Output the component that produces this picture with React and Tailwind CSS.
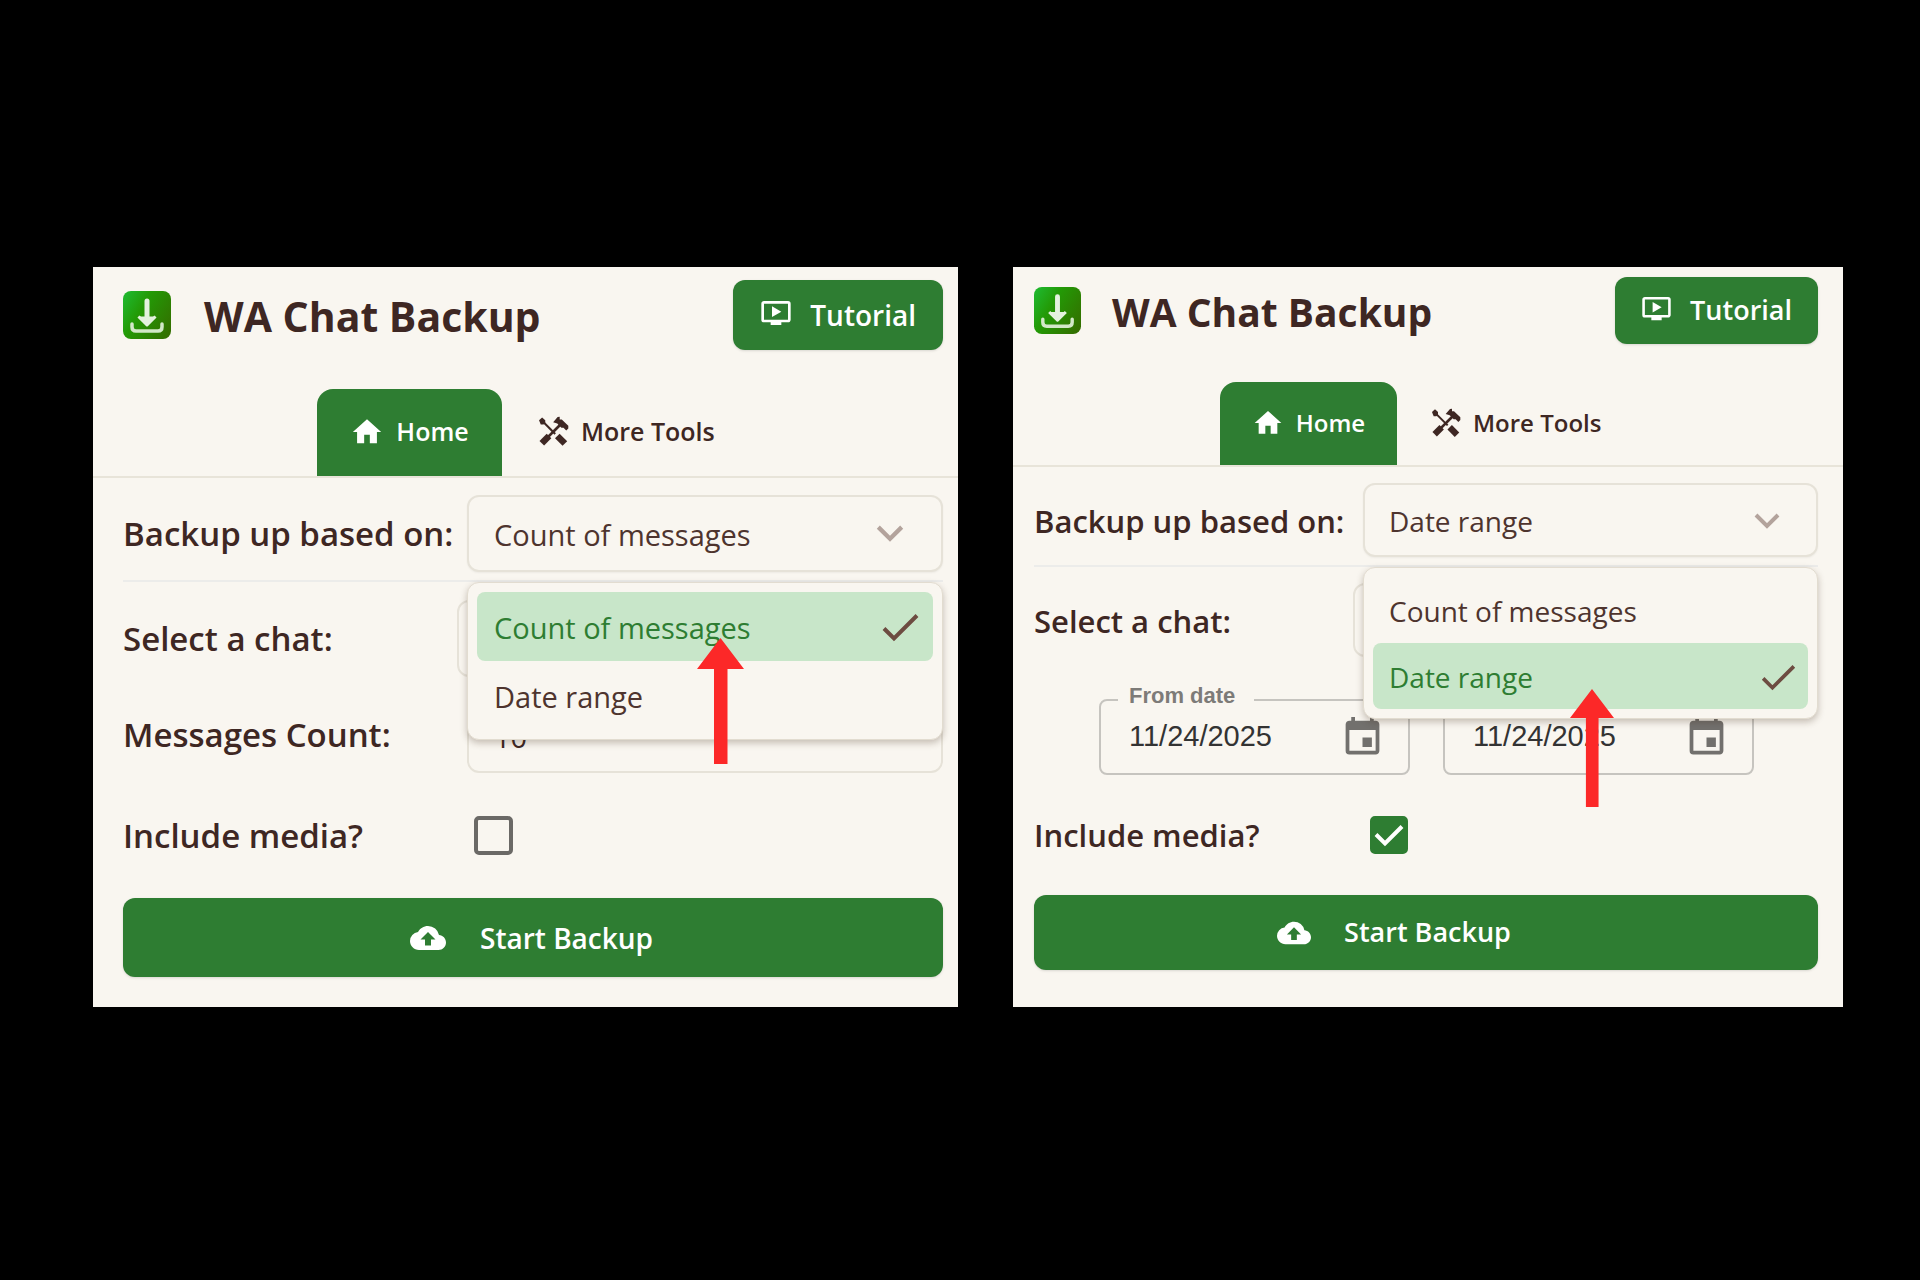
import React from 'react';
import { MdBackup, MdEvent, MdHome, MdOndemandVideo } from 'react-icons/md';

// The popup is drawn twice, once a little smaller than the other
const sizes = {
  large: {
    header: 'h-[122px] pl-[30px] pr-[15px] pt-[13px]',
    brand: 'gap-[33px] h-[69px]',
    logo: 'size-12',
    title: 'text-[41px]',
    tutorial: 'h-[70px] px-[27px] gap-[18px] text-[28px]',
    tutorialIcon: 'size-8 mb-1',
    tabs: 'h-[89px] pl-[224px] gap-[36px] text-[25px]',
    homeTab: 'w-[185px] gap-3',
    toolsTab: 'gap-3',
    tabIcon: 'size-[34px]',
    toolsIcon: 'size-[31px]',
    body: 'pl-[30px] pr-[15px] pb-[30px]',
    label: 'text-[33px] w-[344px]',
    row: 'h-[104px] pt-[17px]',
    chatRow: 'h-[114px] pt-[18px]',
    countRow: 'h-[77px]',
    mediaRow: 'h-[125px]',
    field: 'h-[77px] px-[25px] text-[29px]',
    chevron: 'right-[39px] h-[17px] w-7',
    menu: 'top-[87px] p-[9px]',
    option: 'h-[69px] pt-[2px] pl-[17px] pr-[14px] text-[29px]',
    optionIcon: 'h-[29px] w-[37px]',
    checkbox: 'size-[39px]',
    start: 'h-[79px] text-[28px] gap-[34px] pr-[3px]',
    startIcon: 'size-9',
  },
  small: {
    header: 'h-[115px] pl-[21px] pr-[25px] pt-[10px]',
    brand: 'gap-[31px] h-[67px]',
    logo: 'size-[47px]',
    title: 'text-[39px]',
    tutorial: 'h-[67px] px-[26px] gap-[18px] text-[27px]',
    tutorialIcon: 'size-[31px] mb-1',
    tabs: 'h-[85px] pl-[207px] gap-[34px] text-[24px]',
    homeTab: 'w-[177px] gap-3',
    toolsTab: 'gap-3',
    tabIcon: 'size-8',
    toolsIcon: 'size-[30px]',
    body: 'pl-[21px] pr-[25px] pb-[37px]',
    label: 'text-[31px] w-[329px]',
    row: 'h-[100px] pt-4',
    chatRow: 'h-[124px] pt-4',
    mediaRow: 'h-[120px]',
    field: 'h-[74px] px-6 text-[28px]',
    chevron: 'right-[38px] h-4 w-[26px]',
    menu: 'top-[84px] p-[9px]',
    option: 'h-[66px] pt-[2px] pl-4 pr-3 text-[28px]',
    optionIcon: 'h-[27px] w-[35px]',
    checkbox: 'size-[38px]',
    start: 'h-[75px] text-[27px] gap-[33px] pr-[64px]',
    startIcon: 'size-[34px]',
  },
};

const basis = ['Count of messages', 'Date range'];

function Logo({ className, id }) {
  return (
    <svg viewBox="0 0 48 48" className={className} aria-hidden="true">
      <defs>
        <linearGradient id={id} x1="0" y1="0.2" x2="1" y2="0.8">
          <stop offset="0" stopColor="#1fb52a" />
          <stop offset="0.35" stopColor="#239a06" />
          <stop offset="1" stopColor="#337000" />
        </linearGradient>
      </defs>
      <rect width="48" height="48" rx="8" fill={`url(#${id})`} />
      <path d="M24 10v18" stroke="#e4f2df" strokeWidth="5" strokeLinecap="round" />
      <path d="M15.5 25.5L24 34L32.5 25.5" fill="#e4f2df" stroke="#e4f2df" strokeWidth="3" strokeLinejoin="round" />
      <path d="M9 33v3q0 4 4 4h22q4 0 4-4v-3" fill="none" stroke="#d2e8c8" strokeWidth="3.5" strokeLinecap="round" />
    </svg>
  );
}

function ToolsIcon({ className }) {
  return (
    <svg viewBox="0 0 90 90" className={className} fill="none" stroke="currentColor" aria-hidden="true">
      <path d="M14 16L50 52" strokeWidth="6" />
      <path d="M3 12L12 4L21 12V20L16 25H8z" fill="currentColor" stroke="none" />
      <path d="M56 58L78 80" strokeWidth="19" />
      <path d="M28 62L66 24" strokeWidth="8" />
      <path d="M11 79L32 58" strokeWidth="19" />
      <path d="M44 18L57 3L63 2V10H69L88 28V36L82 42L74 34H68L62 28L56 22z" fill="currentColor" stroke="none" />
    </svg>
  );
}

function Arrow({ className }) {
  return (
    <svg viewBox="0 0 47 126" className={className} aria-hidden="true">
      <path d="M23.5 0L47 31H30.5V126H17V31H0z" fill="#fc2828" />
    </svg>
  );
}

function BasisSelect({ s, id, selected }) {
  return (
    <div className="relative flex-1">
      <select
        id={id}
        defaultValue={selected}
        className={`block w-full appearance-none rounded-[12px] border-2 border-[#e6e2d8] bg-[#f9f6f0] pt-[2px] text-[#4e342e] shadow-xs outline-none ${s.field}`}
      >
        {basis.map((name) => (
          <option key={name}>{name}</option>
        ))}
      </select>
      <svg viewBox="0 0 26 16" className={`pointer-events-none absolute top-[30px] ${s.chevron}`} aria-hidden="true">
        <path d="M2 2L13 13L24 2" fill="none" stroke="#b3a39c" strokeWidth="4" />
      </svg>
      <ul
        role="listbox"
        className={`absolute inset-x-0 z-10 rounded-[12px] border border-[#e2dcd0] bg-[#f9f6f0] shadow-[0_3px_7px_rgba(60,40,20,0.28)] ${s.menu}`}
      >
        {basis.map((name) => (
          <li
            key={name}
            role="option"
            aria-selected={name === selected}
            className={`flex items-center justify-between rounded-lg ${s.option} ${
              name === selected ? 'bg-[#c8e6c9] text-[#2e7d32]' : 'text-[#4e342e]'
            }`}
          >
            {name}
            {name === selected && (
              <svg viewBox="0 0 37 29" className={s.optionIcon} aria-hidden="true">
                <path d="M2 15.5L12 25.5L35 2.5" fill="none" stroke="#6d4c41" strokeWidth="4" />
              </svg>
            )}
          </li>
        ))}
      </ul>
    </div>
  );
}

function DateField({ id, label, name }) {
  return (
    <div className="relative flex h-[76px] flex-1 items-center rounded-lg border-2 border-[#c6c4bf] pr-[23px] pl-7">
      {label && (
        <label
          htmlFor={id}
          className="absolute -top-[18px] left-[17px] bg-[#f9f6f0] pr-[19px] pl-[11px] text-[22px] leading-[26px] font-bold text-[#7d7b78]"
        >
          {label}
        </label>
      )}
      <input
        id={id}
        aria-label={name}
        defaultValue="11/24/2025"
        className="w-0 flex-1 bg-transparent text-[29px] text-[#333] outline-none"
      />
      <button type="button" aria-label="Choose date">
        <MdEvent className="size-[45px] text-[#72706d]" />
      </button>
    </div>
  );
}

function Panel({ size, selected, media, children }) {
  const s = sizes[size];
  return (
    <section className="bg-[#f9f6f0] text-[#3e2723]">
      <header className={`flex items-start justify-between ${s.header}`}>
        <div className={`flex items-center ${s.brand}`}>
          <Logo className={s.logo} id={`logo-${size}`} />
          <h1 className={`pt-1 font-bold whitespace-nowrap ${s.title}`}>WA Chat Backup</h1>
        </div>
        <button type="button" className={`flex items-center rounded-[12px] bg-[#2e7d32] font-semibold text-white shadow-sm ${s.tutorial}`}>
          <MdOndemandVideo className={s.tutorialIcon} />
          Tutorial
        </button>
      </header>

      <nav className={`flex border-b-2 border-[#e8e4d9] font-semibold ${s.tabs}`}>
        <button type="button" className={`flex items-center justify-center rounded-t-[16px] bg-[#2e7d32] pb-[2px] text-white ${s.homeTab}`}>
          <MdHome className={s.tabIcon} />
          Home
        </button>
        <button type="button" className={`flex items-center pb-[2px] ${s.toolsTab}`}>
          <ToolsIcon className={s.toolsIcon} />
          More Tools
        </button>
      </nav>

      <form className={s.body} onSubmit={(e) => e.preventDefault()}>
        <div className={`flex border-b-2 border-[#ececea] ${s.row}`}>
          <label htmlFor={`${size}-basis`} className={`flex h-[77px] items-center font-semibold whitespace-nowrap ${s.label}`}>
            Backup up based on:
          </label>
          <BasisSelect s={s} id={`${size}-basis`} selected={selected} />
        </div>
        <div className={`flex ${s.chatRow}`}>
          <label htmlFor={`${size}-chat`} className={`flex h-[77px] items-center font-semibold ${s.label}`}>
            Select a chat:
          </label>
          <input
            id={`${size}-chat`}
            className={`-ml-[10px] w-0 flex-1 rounded-[12px] border-2 border-[#e6e2d8] bg-transparent outline-none ${s.field}`}
          />
        </div>
        {children}
        <div className={`flex items-center ${s.mediaRow}`}>
          <label htmlFor={`${size}-media`} className={`font-semibold ${s.label}`}>
            Include media?
          </label>
          <span className="ml-[7px] grid">
            <input
              id={`${size}-media`}
              type="checkbox"
              defaultChecked={media}
              className={`peer appearance-none rounded-[5px] border-4 border-[#6b6966] [grid-area:1/1] checked:border-[#2e7d32] checked:bg-[#2e7d32] ${s.checkbox}`}
            />
            <svg viewBox="0 0 38 38" className={`pointer-events-none hidden [grid-area:1/1] peer-checked:block ${s.checkbox}`} aria-hidden="true">
              <path d="M6 18.5L15 27.5L32 10.5" fill="none" stroke="#fff" strokeWidth="4" />
            </svg>
          </span>
        </div>
        <button
          type="submit"
          className={`flex w-full items-center justify-center rounded-[12px] bg-[#2e7d32] font-semibold text-white shadow-sm ${s.start}`}
        >
          <MdBackup className={s.startIcon} />
          Start Backup
        </button>
      </form>
    </section>
  );
}

function App() {
  return (
    <main className="grid min-h-screen grid-cols-[865fr_830fr] items-start gap-[55px] bg-black pt-[267px] pr-[77px] pl-[93px] font-['Open_Sans',sans-serif]">
      <div className="relative">
        <Panel size="large" selected="Count of messages" media={false}>
          <div className={`flex ${sizes.large.countRow}`}>
            <label htmlFor="count" className={`flex items-center font-semibold ${sizes.large.label}`}>
              Messages Count:
            </label>
            <input
              id="count"
              defaultValue="10"
              className={`w-0 flex-1 rounded-[12px] border-2 border-[#e6e2d8] bg-transparent pt-1 text-[#3e2723] outline-none ${sizes.large.field}`}
            />
          </div>
        </Panel>
        <Arrow className="absolute top-[371px] left-[604px] z-20 w-[47px]" />
      </div>
      <div className="relative">
        <Panel size="small" selected="Date range" media>
          <div className="flex gap-[33px] pt-[8px] pr-[64px] pl-[65px] font-['Liberation_Sans',sans-serif]">
            <DateField id="from" label="From date" />
            <DateField id="to" name="To date" />
          </div>
        </Panel>
        <Arrow className="absolute top-[422px] left-[557px] z-20 w-[44px]" />
      </div>
    </main>
  );
}

export default App;
